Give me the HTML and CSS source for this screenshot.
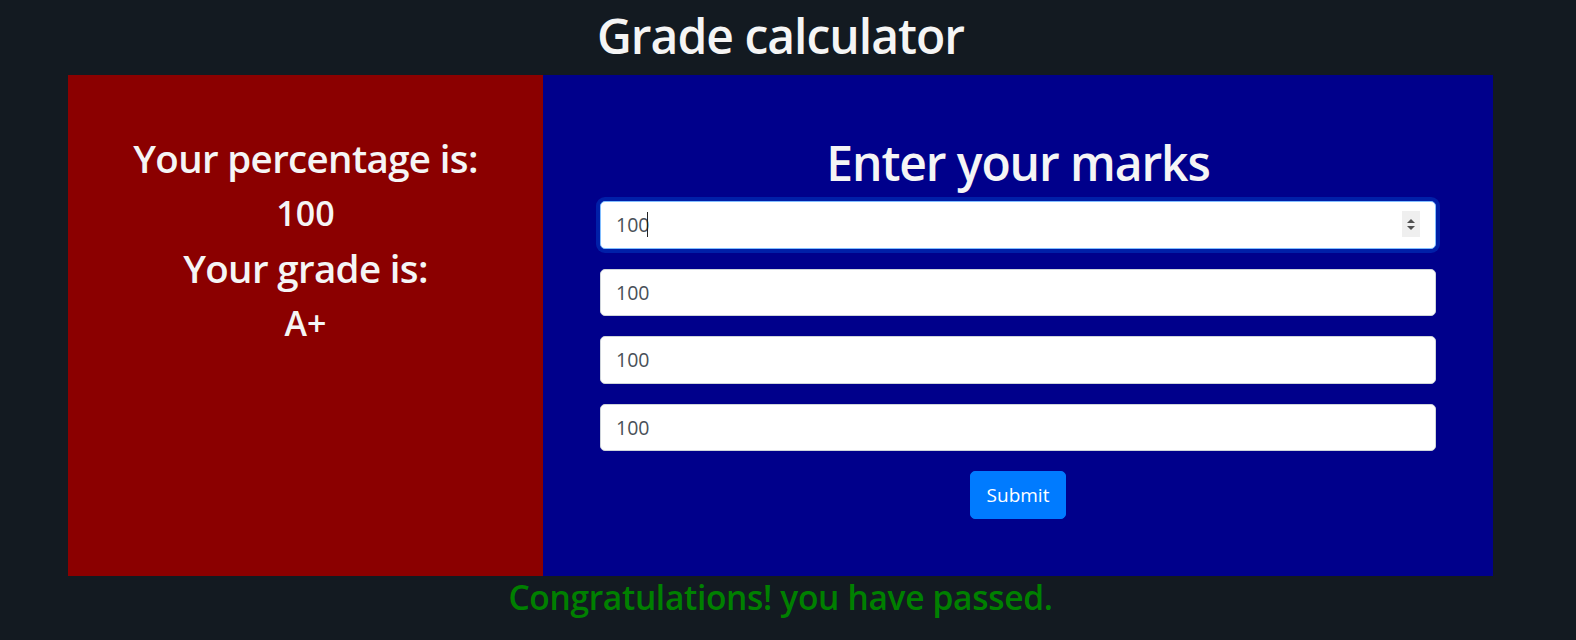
FILE: index.html
```html
<!DOCTYPE html>
<html lang="en">
<head>
<meta charset="utf-8">
<title>Grade calculator</title>
<link rel="stylesheet" href="styles.css">
</head>
<body>
<div class="page">
  <h1 class="page-title">Grade calculator</h1>
  <div class="panels">
    <section class="result">
      <h2 class="result-label">Your percentage is:</h2>
      <h3 class="result-value">100</h3>
      <h2 class="result-label">Your grade is:</h2>
      <h3 class="result-value">A+</h3>
    </section>
    <section class="marks">
      <h1 class="marks-title">Enter your marks</h1>
      <form class="marks-form">
        <div class="field">
          <div class="input-wrap">
            <input class="mark-input focused" type="text" value="100">
            <span class="caret"></span>
            <span class="spinner"><span class="arrow-up"></span><span class="arrow-down"></span></span>
          </div>
        </div>
        <div class="field"><input class="mark-input" type="text" value="100"></div>
        <div class="field"><input class="mark-input" type="text" value="100"></div>
        <div class="field"><input class="mark-input" type="text" value="100"></div>
        <div class="actions"><button class="submit-btn" type="button">Submit</button></div>
      </form>
    </section>
  </div>
  <h3 class="congrats">Congratulations! you have passed.</h3>
</div>
</body>
</html>
```
FILE: styles.css
```css
* { box-sizing: border-box; }
html, body { margin: 0; padding: 0; }
body {
  background: #131a21;
  font-family: "Open Sans", "Noto Sans", sans-serif;
  color: #f5f5f5;
  width: 1576px;
  height: 640px;
  overflow: hidden;
}
.page {
  width: 1425px;
  margin-left: 68px;
}
.page-title {
  margin: 0;
  padding-top: 6px;
  height: 75px;
  font-size: 48px;
  line-height: 60px;
  letter-spacing: -1px;
  font-weight: 600;
  text-align: center;
  color: #f5f5f5;
}
.panels {
  display: flex;
  height: 501px;
}
.result {
  width: 475px;
  background: #8b0000;
  padding: 59px 19px 57px;
  text-align: center;
}
.result-label {
  margin: 0 0 10px;
  font-size: 38.5px;
  line-height: 48px;
  letter-spacing: -0.65px;
  font-weight: 600;
}
.result-value {
  margin: 0 0 10px;
  font-size: 34px;
  line-height: 42px;
  font-weight: 600;
}
.marks {
  flex: 1;
  background: #00008b;
  padding: 58px 57px 56px;
}
.marks-title {
  margin: 0 0 8px;
  text-align: center;
  font-size: 48px;
  line-height: 60px;
  letter-spacing: -1.1px;
  font-weight: 600;
}
.marks-form { margin: 0; }
.field { margin-bottom: 20px; }
.input-wrap { position: relative; }
.mark-input {
  display: block;
  width: 100%;
  height: 47.5px;
  padding: 7.5px 15px;
  font-family: inherit;
  font-size: 19.5px;
  color: #495057;
  background: #fff;
  border: 1px solid #ced4da;
  border-radius: 5px;
  outline: none;
}
.mark-input.focused {
  border-color: #80bdff;
  box-shadow: 0 0 0 4px rgba(0, 123, 255, 0.25);
}
.caret {
  position: absolute;
  left: 47px;
  top: 11px;
  width: 1px;
  height: 25px;
  background: #222;
}
.spinner {
  position: absolute;
  right: 16px;
  top: 10px;
  width: 18px;
  height: 26px;
  background: #efefef;
  display: flex;
  flex-direction: column;
  align-items: center;
  justify-content: center;
  gap: 3px;
}
.arrow-up, .arrow-down {
  width: 0;
  height: 0;
  border-left: 4.5px solid transparent;
  border-right: 4.5px solid transparent;
}
.arrow-up { border-bottom: 4.5px solid #505050; }
.arrow-down { border-top: 4.5px solid #505050; }
.actions { text-align: center; }
.submit-btn {
  font-family: inherit;
  font-size: 19px;
  line-height: 30px;
  color: #fff;
  background: #007bff;
  border: 1px solid #007bff;
  border-radius: 5px;
  padding: 7.5px 15.5px;
  height: 47.5px;
}
.congrats {
  margin: 0;
  text-align: center;
  font-size: 33.6px;
  line-height: 42px;
  letter-spacing: -0.35px;
  font-weight: 600;
  color: #008000;
}
```
